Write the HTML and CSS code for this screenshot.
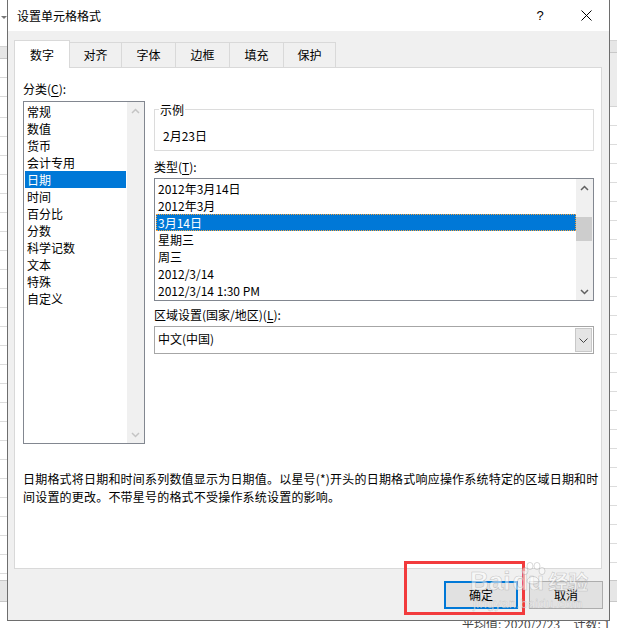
FILE: index.html
```html
<!DOCTYPE html>
<html lang="zh-CN">
<head>
<meta charset="utf-8">
<title>设置单元格格式</title>
<link rel="stylesheet" href="styles.css">
</head>
<body>
<div class="sheet">
  <div class="strip strip-left">
    <div class="fx"><span class="fx-arrow"></span></div>
    <div class="colhdr"></div>
    <div class="band"></div>
    <div class="rows"></div>
    <div class="sheettabs"></div>
    <div class="rows rows-end"></div>
  </div>
  <div class="strip strip-right">
    <div class="fx fx-r"></div>
    <div class="colhdr colhdr-r"></div>
    <div class="band band-r"></div>
    <div class="rows"></div>
    <div class="sheettabs"></div>
    <div class="rows rows-end"></div>
  </div>
  <div class="status">平均值: 2020/2/23&nbsp;&nbsp;&nbsp;&nbsp;&nbsp;计数: 1</div>
</div>

<div class="dialog">
  <div class="titlebar">
    <span class="title">设置单元格格式</span>
    <span class="capbtn help">?</span>
    <span class="capbtn">
      <svg width="11" height="11" viewBox="0 0 11 11"><path d="M0.5 0.5 L10.5 10.5 M10.5 0.5 L0.5 10.5" stroke="#000" stroke-width="1" fill="none"/></svg>
    </span>
  </div>
  <div class="dlgbody">
    <div class="tabs">
      <div class="tab active w56">数字</div>
      <div class="tab w53">对齐</div>
      <div class="tab w55">字体</div>
      <div class="tab w55">边框</div>
      <div class="tab w55">填充</div>
      <div class="tab w53">保护</div>
    </div>
    <div class="panel">
      <div class="cols">
        <div class="leftcol">
          <div class="lbl">分类(<u>C</u>):</div>
          <div class="listbox catlist">
            <div class="items">
              <div class="item">常规</div>
              <div class="item">数值</div>
              <div class="item">货币</div>
              <div class="item">会计专用</div>
              <div class="item sel">日期</div>
              <div class="item">时间</div>
              <div class="item">百分比</div>
              <div class="item">分数</div>
              <div class="item">科学记数</div>
              <div class="item">文本</div>
              <div class="item">特殊</div>
              <div class="item">自定义</div>
            </div>
            <div class="vscroll">
              <div class="arrow"><svg width="9" height="6" viewBox="0 0 9 6"><path d="M1 5 L4.5 1.5 L8 5" fill="none" stroke="#c4c4c4" stroke-width="1.5"/></svg></div>
              <div class="spacer"></div>
              <div class="arrow"><svg width="9" height="6" viewBox="0 0 9 6"><path d="M1 1 L4.5 4.5 L8 1" fill="none" stroke="#c4c4c4" stroke-width="1.5"/></svg></div>
            </div>
          </div>
        </div>
        <div class="rightcol">
          <fieldset class="sample">
            <legend>示例</legend>
            <div class="sample-val">2月23日</div>
          </fieldset>
          <div class="lbl lbl-type">类型(<u>T</u>):</div>
          <div class="listbox typelist">
            <div class="items">
              <div class="item">2012年3月14日</div>
              <div class="item">2012年3月</div>
              <div class="item sel focus">3月14日</div>
              <div class="item">星期三</div>
              <div class="item">周三</div>
              <div class="item">2012/3/14</div>
              <div class="item">2012/3/14 1:30 PM</div>
            </div>
            <div class="vscroll">
              <div class="arrow"><svg width="9" height="6" viewBox="0 0 9 6"><path d="M1 5 L4.5 1.5 L8 5" fill="none" stroke="#606060" stroke-width="1.5"/></svg></div>
              <div class="thumb"></div>
              <div class="spacer"></div>
              <div class="arrow"><svg width="9" height="6" viewBox="0 0 9 6"><path d="M1 1 L4.5 4.5 L8 1" fill="none" stroke="#606060" stroke-width="1.5"/></svg></div>
            </div>
          </div>
          <div class="lbl lbl-locale">区域设置(国家/地区)(<u>L</u>):</div>
          <div class="combo">
            <div class="combo-text">中文(中国)</div>
            <div class="combo-btn"><svg width="9" height="5" viewBox="0 0 9 5"><path d="M0.5 0.5 L4.5 4.5 L8.5 0.5" fill="none" stroke="#444" stroke-width="1"/></svg></div>
          </div>
        </div>
      </div>
      <p class="desc">
        <span class="desc-line">日期格式将日期和时间系列数值显示为日期值。以星号(*)开头的日期格式响应操作系统特定的区域日期和时</span>
        <span class="desc-line">间设置的更改。不带星号的格式不受操作系统设置的影响。</span>
      </p>
    </div>
    <div class="buttons">
      <div class="btn default">确定</div>
      <div class="btn">取消</div>
    </div>
  </div>
</div>

<div class="annot"></div>
<div class="watermark">
  <div class="wm-logo"><span class="wm-bai">Bai</span><span class="wm-du">du</span><span class="wm-cn">经验</span></div>
  <svg class="wm-paw" width="26" height="24" viewBox="0 0 26 24">
    <ellipse cx="5" cy="9" rx="3" ry="3.6"/>
    <ellipse cx="10" cy="4" rx="3" ry="3.6"/>
    <ellipse cx="17" cy="4" rx="3" ry="3.6"/>
    <ellipse cx="22" cy="9" rx="3" ry="3.6"/>
    <path d="M7 19 C8 13 18 13 19 19 C19 23 7 23 7 19 Z"/>
  </svg>
  <div class="wm-url">jingyan.baidu.com</div>
</div>
</body>
</html>
```

FILE: styles.css
```css
html, body {
  margin: 0;
  padding: 0;
}
body {
  width: 617px;
  height: 628px;
  position: relative;
  overflow: hidden;
  background: #ffffff;
  font-family: "Noto Sans CJK SC", "Noto Sans", sans-serif;
  font-size: 12px;
  color: #000;
}

/* ---------- spreadsheet behind the dialog ---------- */
.sheet {
  position: absolute;
  left: 0;
  top: 0;
  width: 617px;
  height: 628px;
  z-index: 0;
}
.strip {
  position: absolute;
  top: 0;
  width: 8px;
  height: 628px;
  display: flex;
  flex-direction: column;
}
.strip-left { left: 0; }
.strip-right { right: 0; }
.fx {
  height: 46px;
  background: #fff;
  position: relative;
}
.fx-r { height: 40px; }
.fx-arrow {
  position: absolute;
  left: 1px;
  top: 16px;
  width: 0;
  height: 0;
  border-left: 3px solid transparent;
  border-right: 3px solid transparent;
  border-top: 3px solid #777;
}
.colhdr {
  height: 11px;
  background: #e6e6e6;
  border-top: 1px solid #d4d4d4;
  border-bottom: 1px solid #c8c8c8;
}
.colhdr-r { height: 11px; }
.band {
  height: 40px;
  background: repeating-linear-gradient(to bottom, #fff 0 18px, #d9d9d9 18px 19px);
}
.band-r {
  height: 53px;
  background: #ececec;
  border-bottom: 1px solid #d4d4d4;
}
.rows {
  flex: 1;
  background: repeating-linear-gradient(to bottom, #fff 0 18px, #dcdcdc 18px 19px);
}
.sheettabs {
  height: 20px;
  background: #e6e6e6;
  border-top: 1px solid #c8c8c8;
  border-bottom: 1px solid #c8c8c8;
}
.rows-end {
  flex: 0 0 26px;
  background: #fff;
}
.status {
  position: absolute;
  left: 462px;
  top: 616px;
  line-height: 16px;
  font-size: 12px;
  color: #444;
  white-space: nowrap;
}

/* ---------- dialog ---------- */
.dialog {
  position: absolute;
  left: 7px;
  top: -1px;
  width: 601px;
  height: 620px;
  border: 1px solid #6e6e6e;
  background: #f0f0f0;
  z-index: 2;
  display: flex;
  flex-direction: column;
}
.titlebar {
  height: 31px;
  flex: 0 0 31px;
  background: #fff;
  display: flex;
  align-items: center;
}
.title {
  flex: 1;
  padding-left: 9px;
  line-height: 16px;
  font-size: 12px;
}
.capbtn {
  width: 46px;
  height: 31px;
  display: flex;
  align-items: center;
  justify-content: center;
}
.help {
  font-family: "Liberation Sans", "DejaVu Sans", sans-serif;
  font-size: 13px;
}

.dlgbody {
  flex: 1;
  padding: 9px 0 0 6px;
  display: flex;
  flex-direction: column;
}
.tabs {
  display: flex;
  align-items: flex-end;
  height: 27px;
}
.tab {
  height: 25px;
  box-sizing: border-box;
  border: 1px solid #d9d9d9;
  border-bottom: 0;
  background: #f0f0f0;
  text-align: center;
  padding-top: 4px;
  line-height: 16px;
  margin-left: -1px;
}
.tab.active {
  height: 28px;
  margin-bottom: -1px;
  margin-left: 0;
  background: #fff;
  padding-top: 6px;
  position: relative;
  z-index: 1;
}
.w56 { width: 56px; }
.w55 { width: 55px; }
.w53 { width: 53px; }

.panel {
  width: 588px;
  height: 502px;
  box-sizing: border-box;
  border: 1px solid #d9d9d9;
  background: #fff;
  padding: 12px 7px 0 8px;
}
.cols {
  display: flex;
  gap: 9px;
}
.leftcol { width: 122px; }
.rightcol { width: 440px; }
.lbl {
  height: 17px;
  line-height: 17px;
  white-space: nowrap;
}
.lbl u { text-underline-offset: 2px; }

.listbox {
  box-sizing: border-box;
  border: 1px solid #828790;
  background: #fff;
  display: flex;
}
.catlist {
  margin-top: 4px;
  height: 343px;
}
.catlist .items {
  flex: 1;
  padding: 1px;
}
.item {
  height: 17px;
  line-height: 17px;
  padding-left: 2px;
  white-space: nowrap;
}
.item.sel {
  background: #0078d7;
  color: #fff;
}
.item.focus {
  outline: 1px dotted #f7a23a;
  outline-offset: -1px;
}
.vscroll {
  width: 17px;
  flex: 0 0 17px;
  background: #f0f0f0;
  display: flex;
  flex-direction: column;
}
.arrow {
  height: 17px;
  flex: 0 0 17px;
  display: flex;
  align-items: center;
  justify-content: center;
}
.spacer { flex: 1; }
.thumb {
  margin-top: 21px;
  height: 24px;
  flex: 0 0 24px;
  margin-right: 1px;
  background: #cdcdcd;
}

.sample {
  margin: 21px 0 0 0;
  border: 1px solid #dcdcdc;
  padding: 9px 0 6px 8px;
  min-width: 0;
}
.sample legend {
  padding: 0 1px;
  margin-left: -4px;
  line-height: 17px;
}
.sample-val {
  line-height: 17px;
}
.lbl-type { margin-top: 7px; }
.typelist {
  margin-top: 3px;
  height: 123px;
}
.typelist .items {
  flex: 1;
  padding: 1px 0 1px 1px;
}
.lbl-locale { margin-top: 5px; }
.combo {
  margin-top: 3px;
  height: 28px;
  box-sizing: border-box;
  border: 1px solid #a6a6a6;
  background: #fff;
  display: flex;
}
.combo-text {
  flex: 1;
  padding-left: 3px;
  line-height: 24px;
}
.combo-btn {
  width: 15px;
  margin: 1px;
  border: 1px solid #c8c8c8;
  background: #e5e5e5;
  display: flex;
  align-items: center;
  justify-content: center;
}

.desc {
  margin: 26px 0 0 0;
  line-height: 18px;
  letter-spacing: 0.2px;
}
.desc-line {
  display: block;
  white-space: nowrap;
}

.buttons {
  display: flex;
  justify-content: flex-end;
  gap: 11px;
  margin-top: 12px;
  padding-right: 6px;
}
.btn {
  width: 74px;
  height: 28px;
  box-sizing: border-box;
  border: 1px solid #adadad;
  background: #e1e1e1;
  text-align: center;
  line-height: 26px;
}
.btn.default {
  border: 2px solid #0078d7;
  line-height: 24px;
}

/* ---------- overlays ---------- */
.annot {
  position: absolute;
  left: 404px;
  top: 561px;
  width: 121px;
  height: 54px;
  box-sizing: border-box;
  border: 3px solid #f23b3d;
  z-index: 3;
}
.watermark {
  position: absolute;
  left: 470px;
  top: 566px;
  width: 140px;
  height: 48px;
  z-index: 4;
  pointer-events: none;
}
.wm-logo {
  display: flex;
  align-items: baseline;
  line-height: 30px;
  white-space: nowrap;
}
.wm-bai, .wm-du {
  font-family: "Liberation Sans", sans-serif;
  font-weight: bold;
  font-size: 26px;
  color: rgba(255, 255, 255, 0.55);
  -webkit-text-stroke: 0.6px rgba(140, 140, 140, 0.45);
}
.wm-du { margin-left: 2px; }
.wm-cn {
  margin-left: 4px;
  font-size: 20px;
  font-weight: bold;
  color: rgba(255, 255, 255, 0.55);
  -webkit-text-stroke: 0.6px rgba(140, 140, 140, 0.45);
}
.wm-paw {
  position: absolute;
  left: 50px;
  top: -4px;
  fill: rgba(255, 255, 255, 0.45);
  stroke: rgba(140, 140, 140, 0.4);
  stroke-width: 0.8;
}
.wm-url {
  font-family: "Liberation Sans", sans-serif;
  font-size: 13px;
  line-height: 14px;
  margin-left: 3px;
  color: rgba(255, 255, 255, 0.6);
  -webkit-text-stroke: 0.4px rgba(140, 140, 140, 0.45);
  letter-spacing: 0.3px;
}
```
